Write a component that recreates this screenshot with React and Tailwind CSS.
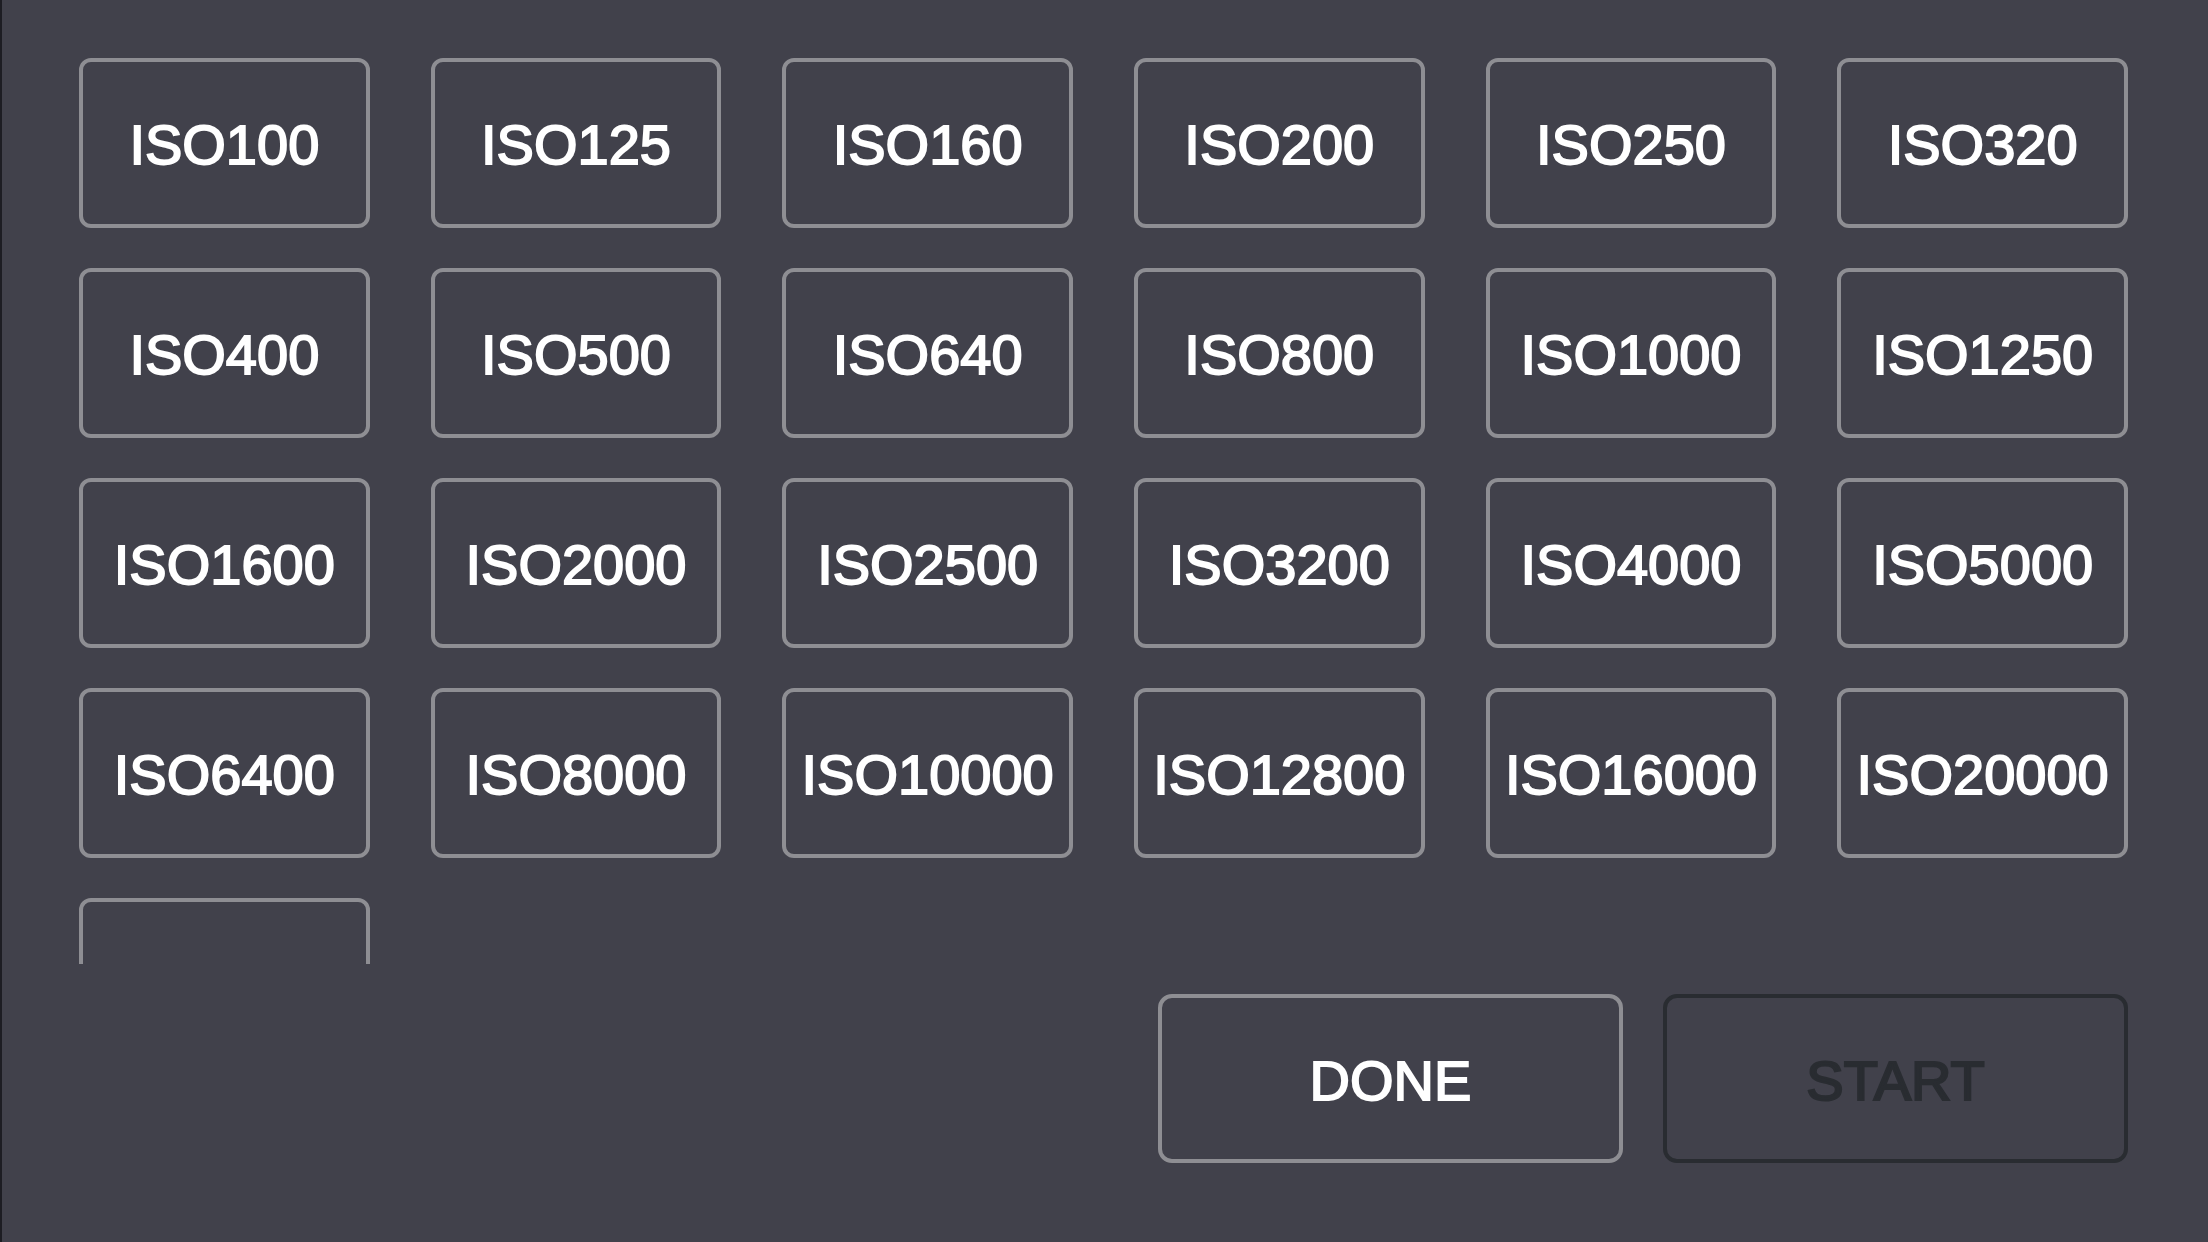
import React from 'react';

// ISO values shown in the picker grid
const ISO_VALUES = [
  100, 125, 160, 200, 250, 320,
  400, 500, 640, 800, 1000, 1250,
  1600, 2000, 2500, 3200, 4000, 5000,
  6400, 8000, 10000, 12800, 16000, 20000,
  25600,
];

const FONT = { fontFamily: '"Liberation Sans", Arial, sans-serif' };

function IsoButton({ value }) {
  return (
    <button className="h-[170px] w-full rounded-[12px] border-4 border-[#8e8e93] bg-transparent flex items-center justify-center pt-[4px] text-white text-[56px] leading-none [-webkit-text-stroke:1.8px_white]">
      ISO{value}
    </button>
  );
}

export default function App() {
  return (
    <div className="w-full h-[1242px] flex bg-[#41414b] overflow-hidden" style={FONT}>
      {/* thin dark edge on the left */}
      <div className="w-[2px] h-full bg-[#1d1d23] shrink-0" />

      <div className="flex-1 flex flex-col">
        <div className="h-[964px] overflow-hidden pt-[58px] pl-[77px] pr-[80px]">
          <div className="grid grid-cols-6 gap-x-[61px] gap-y-[40px]">
            {ISO_VALUES.map((v) => (
              <IsoButton key={v} value={v} />
            ))}
          </div>
        </div>

        {/* Action buttons */}
        <div className="flex justify-end gap-[40px] pt-[30px] pr-[80px]">
          <button className="w-[465px] h-[169px] rounded-[14px] border-4 border-[#8e8e93] flex items-center justify-center pt-[4px] text-white text-[56px] leading-none [-webkit-text-stroke:1.8px_white]">
            DONE
          </button>
          <button className="w-[465px] h-[169px] rounded-[14px] border-4 border-[#292c31] flex items-center justify-center pt-[4px] text-[#292c31] text-[56px] leading-none [-webkit-text-stroke:2.2px_#292c31]">
            START
          </button>
        </div>
      </div>
    </div>
  );
}
